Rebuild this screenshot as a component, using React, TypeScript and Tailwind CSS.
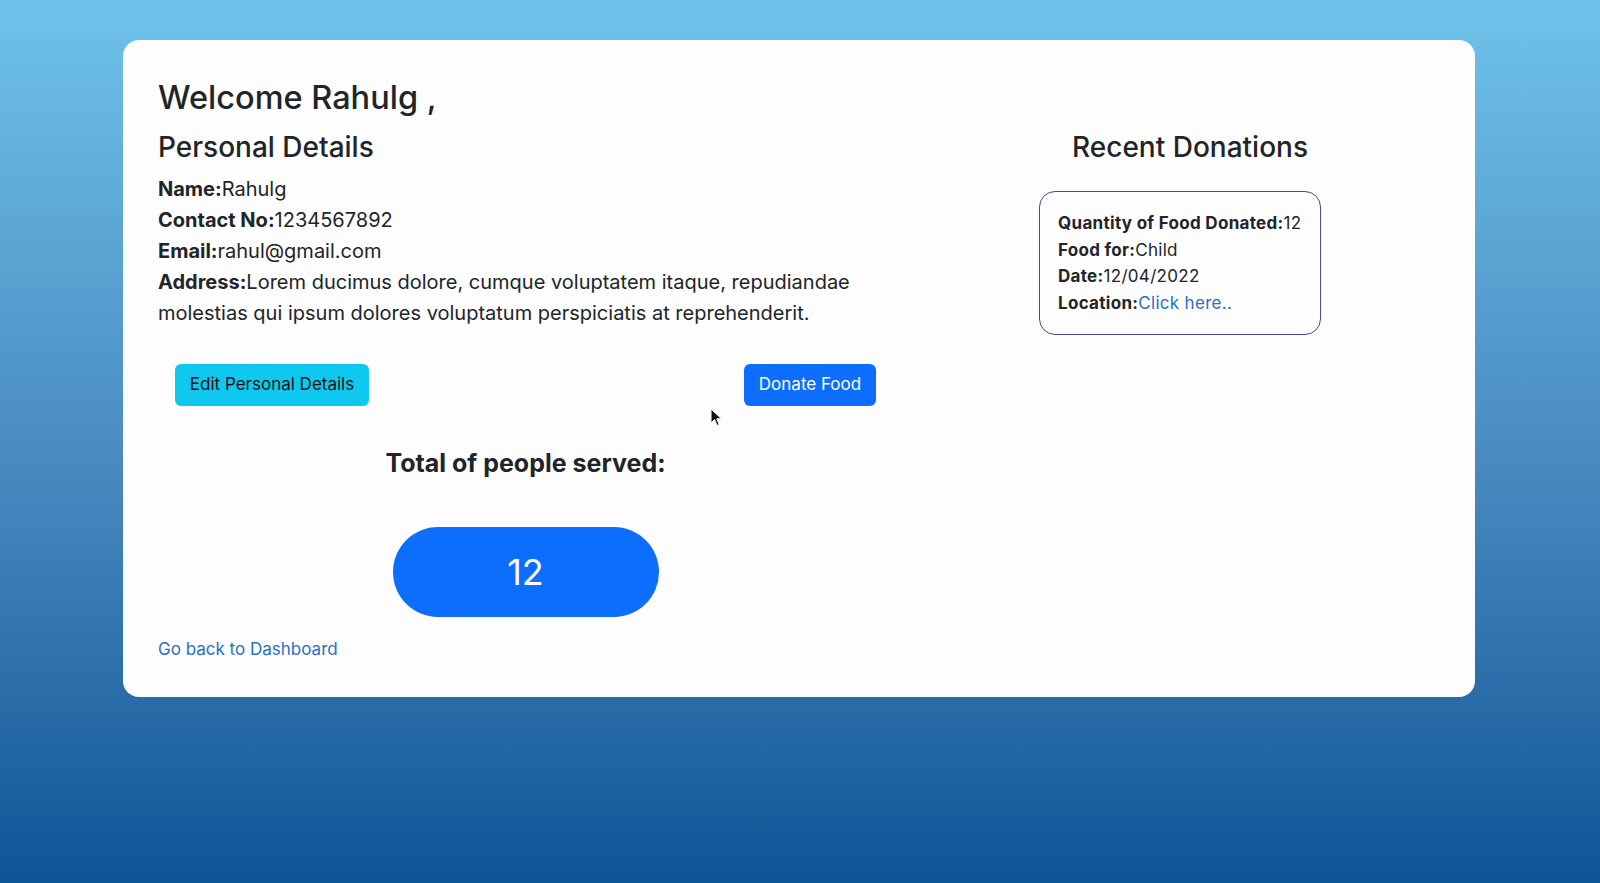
import React from "react";

const font = { fontFamily: "Inter, 'Noto Sans', 'Liberation Sans', sans-serif" };

export default function App() {
  return (
    <div
      className="relative w-full h-[883px] overflow-hidden bg-gradient-to-b from-[#6fc3eb] via-[#4b8dc2] to-[#0c5596] pt-[40px] pl-[123px] pr-[125px] text-[#212529]"
      style={font}
    >
      <div className="h-[657px] rounded-[16px] bg-[#fdfdfd] pl-[35px] pt-[39px] flex">
        {/* Left column */}
        <div className="w-[718px] flex flex-col">
          <h2 className="text-[32.5px] leading-[38px] font-medium">Welcome Rahulg ,</h2>
          <h3 className="mt-[13px] text-[28px] leading-[34px] font-medium">Personal Details</h3>
          <div className="mt-[10px] text-[20px] leading-[31px]">
            <p><span className="font-bold">Name:</span>Rahulg</p>
            <p><span className="font-bold">Contact No:</span>1234567892</p>
            <p><span className="font-bold">Email:</span>rahul@gmail.com</p>
            <p>
              <span className="font-bold">Address:</span>Lorem ducimus dolore, cumque voluptatem itaque, repudiandae
              molestias qui ipsum dolores voluptatum perspiciatis at reprehenderit.
            </p>
          </div>
          <div className="pl-[17px]">
            <div className="mt-[35px] flex justify-between">
              <button className="h-[42px] w-[194px] rounded-[6px] bg-[#0fc8ef] text-[17px] text-[#111]">
                Edit Personal Details
              </button>
              <button className="h-[42px] w-[132px] rounded-[6px] bg-[#0d6efd] text-[17px] text-white">
                Donate Food
              </button>
            </div>
            <div className="flex flex-col items-center">
              <h4 className="mt-[42px] text-[25px] leading-[30px] font-bold">Total of people served:</h4>
              <div className="mt-[49px] h-[90px] w-[266px] rounded-full bg-[#0d6efd] flex items-center justify-center text-white text-[36px]">
                12
              </div>
            </div>
          </div>
          <a className="mt-[20px] text-[17px] leading-[24px] text-[#2a6fc4] cursor-pointer">
            Go back to Dashboard
          </a>
        </div>

        {/* Right column */}
        <div className="ml-[163px] w-[302px] pt-[51px]">
          <h3 className="text-center text-[28px] leading-[34px] font-medium">Recent Donations</h3>
          <div className="mt-[27px] w-[282px] rounded-[16px] border-[1.5px] border-[#4a4898] px-[18px] py-[18px] text-[17px] leading-[26.5px] tracking-[0.3px]">
            <p><span className="font-bold">Quantity of Food Donated:</span>12</p>
            <p><span className="font-bold">Food for:</span>Child</p>
            <p><span className="font-bold">Date:</span>12/04/2022</p>
            <p><span className="font-bold">Location:</span><a className="text-[#2a6fc4] cursor-pointer">Click here..</a></p>
          </div>
        </div>
      </div>

      {/* mouse cursor */}
      <svg className="absolute left-[710px] top-[408px]" width="14" height="20" viewBox="0 0 14 20">
        <path d="M1 1 L1 15 L4.5 11.5 L7 17.5 L9.2 16.6 L6.8 10.8 L11.5 10.8 Z" fill="#111" stroke="#fff" strokeWidth="1" />
      </svg>
    </div>
  );
}
